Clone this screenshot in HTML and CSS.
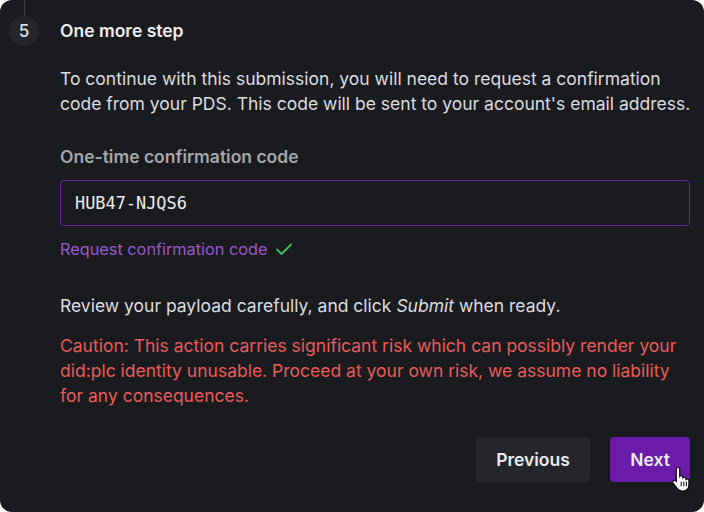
FILE: index.html
```html
<!DOCTYPE html>
<html>
<head>
<meta charset="utf-8">
<link rel="stylesheet" href="styles.css">
</head>
<body>
<div class="card">
  <div class="step">
    <div class="rail">
      <div class="connector"></div>
      <div class="badge">5</div>
    </div>
    <div class="content">
      <h2 class="title">One more step</h2>
      <p class="text intro">To continue with this submission, you will need to request a confirmation code from your PDS. This code will be sent to your account's email address.</p>
      <label class="label">One-time confirmation code</label>
      <div class="input">HUB47-NJQS6</div>
      <div class="request">
        <span class="link">Request confirmation code</span>
        <svg class="check" width="18" height="14" viewBox="0 0 18 14"><path d="M2 7.5 L6.5 12 L16 2.5" fill="none" stroke="#40c057" stroke-width="1.8" stroke-linecap="round" stroke-linejoin="round"/></svg>
      </div>
      <p class="text review">Review your payload carefully, and click <em>Submit</em> when ready.</p>
      <p class="text caution">Caution: This action carries significant risk which can possibly render your did:plc identity unusable. Proceed at your own risk, we assume no liability for any consequences.</p>
      <div class="actions">
        <button class="btn btn-secondary">Previous</button>
        <button class="btn btn-primary">Next
          <svg class="cursor" width="20" height="26" viewBox="0 0 20 26"><path d="M6 1.5c1 0 1.7.7 1.7 1.7v7.3c.3-.5.9-.8 1.5-.8 1 0 1.7.7 1.7 1.7v.5c.3-.4.8-.7 1.4-.7 1 0 1.7.7 1.7 1.7v.6c.3-.3.8-.5 1.2-.5 1 0 1.7.7 1.7 1.7v4.6c0 3.2-2.6 5.7-5.7 5.7H9.8c-1.8 0-3.4-.9-4.5-2.3L1.2 17.3c-.6-.8-.5-1.9.3-2.5.7-.6 1.8-.5 2.4.2l.4.5V3.2c0-1 .7-1.7 1.7-1.7z" fill="#fff" stroke="#000" stroke-width="1.1"/><path d="M9.2 16v4M11.8 16v4M14.4 16v4" stroke="#000" stroke-width="1" stroke-linecap="round"/></svg>
        </button>
      </div>
    </div>
  </div>
</div>
</body>
</html>
```
FILE: styles.css
```css
html, body {
  margin: 0;
  padding: 0;
  background: #ffffff;
}
body {
  width: 704px;
  height: 512px;
  overflow: hidden;
  font-family: Inter, "Noto Sans", sans-serif;
}
.card {
  width: 704px;
  height: 512px;
  box-sizing: border-box;
  background: #1a1b1e;
  border-radius: 12px;
  padding: 0 14px 0 9px;
  color: #e9ecef;
}
.step {
  display: flex;
  gap: 21px;
}
.rail {
  width: 30px;
  display: flex;
  flex-direction: column;
  align-items: center;
  flex-shrink: 0;
}
.connector {
  width: 1px;
  height: 16px;
  background: #3d4047;
}
.badge {
  width: 30px;
  height: 30px;
  border-radius: 50%;
  background: #25262b;
  color: #dfe1e4;
  font-size: 17px;
  font-weight: 500;
  display: flex;
  align-items: center;
  justify-content: center;
}
.content {
  flex: 1;
  min-width: 0;
  padding-top: 20px;
}
.title {
  margin: 0;
  font-size: 17.5px;
  font-weight: 600;
  line-height: 22px;
  color: #eceef0;
}
.text {
  margin: 24px 0 0;
  font-size: 17.5px;
  line-height: 25px;
  color: #dcdde0;
}
.intro {
  margin-right: -6px;
}
.label {
  display: block;
  margin-top: 30px;
  font-size: 17.5px;
  font-weight: 600;
  line-height: 22px;
  color: #a6a7ab;
}
.input {
  margin-top: 12px;
  height: 46px;
  box-sizing: border-box;
  border: 1px solid #6a1fa6;
  border-radius: 4px;
  padding: 0 14px;
  display: flex;
  align-items: center;
  font-family: "DejaVu Sans Mono", "Liberation Mono", monospace;
  font-size: 16.9px;
  color: #e9ecef;
}
.request {
  margin-top: 12px;
  display: flex;
  align-items: center;
  gap: 7px;
  height: 22px;
}
.link {
  font-size: 16.3px;
  color: #9b59d0;
}
.review {
  margin-top: 33px;
}
.caution {
  margin-top: 15px;
  color: #e85b5b;
}
.actions {
  margin-top: 29px;
  display: flex;
  justify-content: flex-end;
  gap: 20px;
}
.btn {
  position: relative;
  height: 45px;
  border: none;
  border-radius: 4px;
  padding: 0;
  font-family: Inter, "Noto Sans", sans-serif;
  font-size: 17.5px;
  font-weight: 600;
  color: #e9ecef;
  cursor: pointer;
}
.btn-secondary {
  background: #25262b;
  width: 114px;
}
.btn-primary {
  background: #6a1ba9;
  width: 80px;
}
.cursor {
  position: absolute;
  left: 62px;
  top: 29px;
}
```
